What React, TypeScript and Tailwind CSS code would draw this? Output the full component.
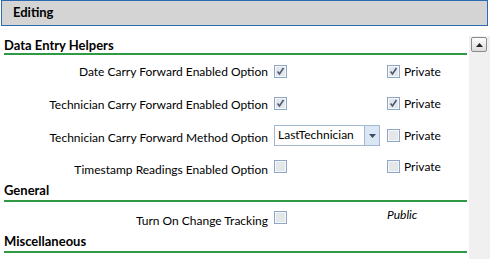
import * as React from "react"

function Check({ checked = false }: { checked?: boolean }) {
  return (
    <div className="flex h-[13px] w-[13px] shrink-0 items-center justify-center border border-[#8fa7c6] bg-[#e4e6ea] shadow-[inset_0_0_0_1px_#f6f7f9]">
      {checked && (
        <svg width="9" height="9" viewBox="0 0 9 9">
          <path d="M1.5 4.5 L3.5 7 L7.5 1" fill="none" stroke="#4b5a78" strokeWidth="1.6" />
        </svg>
      )}
    </div>
  )
}

function SectionHeading({ title, className = "" }: { title: string; className?: string }) {
  return (
    <div className={"ml-[4px] mr-[2px] border-b-2 border-[#2f9a45] text-[13px] font-bold leading-[16px] text-black " + className}>
      {title}
    </div>
  )
}

function PrivateBox({ checked = false }: { checked?: boolean }) {
  return (
    <div className="flex items-center gap-[4px]">
      <Check checked={checked} />
      <span className="text-[12px] leading-[13px]">Private</span>
    </div>
  )
}

export default function App() {
  return (
    <div
      className="h-[259px] w-[490px] overflow-hidden bg-white text-black"
      style={{ fontFamily: 'Lato, "Noto Sans", sans-serif' }}
    >
      <div className="ml-[1px] flex h-[26px] w-[487px] items-center border border-[#2d6bb0] bg-[#d4d4d4] pl-[11px] text-[13px] font-bold">
        Editing
      </div>

      <div className="flex">
        <div className="w-[469px]">
          <SectionHeading title="Data Entry Helpers" className="pt-[11px]" />

          <div className="flex h-[32px] items-start pt-[10px]">
            <div className="w-[268px] text-right text-[12px] leading-[14px]">Date Carry Forward Enabled Option</div>
            <div className="ml-[6px] w-[113px]">
              <Check checked />
            </div>
            <PrivateBox checked />
          </div>

          <div className="flex h-[32px] items-start pt-[10px]">
            <div className="w-[268px] pt-[1px] text-right text-[12px] leading-[14px]">Technician Carry Forward Enabled Option</div>
            <div className="ml-[6px] w-[113px]">
              <Check checked />
            </div>
            <PrivateBox checked />
          </div>

          <div className="flex h-[32px] items-start pt-[10px]">
            <div className="w-[268px] pt-[2px] text-right text-[12px] leading-[14px]">Technician Carry Forward Method Option</div>
            <div className="ml-[6px] w-[113px]">
              <div className="-mt-[4px] flex h-[21px] w-[106px] border border-[#a3b7d3] bg-white">
                <span className="flex-1 pl-[3px] text-[12px] leading-[18px]">LastTechnician</span>
                <div className="flex w-[15px] items-center justify-center border-l border-[#a3b7d3] bg-[#dce7f5]">
                  <svg width="7" height="4" viewBox="0 0 7 4">
                    <path d="M0 0 H7 L3.5 4 Z" fill="#3d4c66" />
                  </svg>
                </div>
              </div>
            </div>
            <PrivateBox />
          </div>

          <div className="flex h-[31px] items-start pt-[9px]">
            <div className="w-[268px] pt-[3px] text-right text-[12px] leading-[14px]">Timestamp Readings Enabled Option</div>
            <div className="ml-[6px] w-[113px]">
              <Check />
            </div>
            <PrivateBox />
          </div>

          <SectionHeading title="General" className="pb-[2px]" />

          <div className="flex h-[31px] items-start pt-[9px]">
            <div className="w-[268px] pt-[3px] text-right text-[12px] leading-[14px]">Turn On Change Tracking</div>
            <div className="ml-[6px] w-[113px]">
              <Check />
            </div>
            <span className="-mt-[3px] text-[12px] italic leading-[14px]">Public</span>
          </div>

          <SectionHeading title="Miscellaneous" className="pb-[2px]" />
        </div>

        <div className="mt-[10px] h-[223px] w-[21px] bg-[#f0f0f0] pl-[2px] pt-[1px]">
          <div className="flex h-[15px] w-[16px] items-center justify-center rounded-[2px] border border-[#8a8a8a] bg-gradient-to-b from-[#fdfdfd] to-[#dcdcdc]">
            <svg width="7" height="4" viewBox="0 0 7 4">
              <path d="M0 4 H7 L3.5 0 Z" fill="#222" />
            </svg>
          </div>
        </div>
      </div>
    </div>
  )
}
